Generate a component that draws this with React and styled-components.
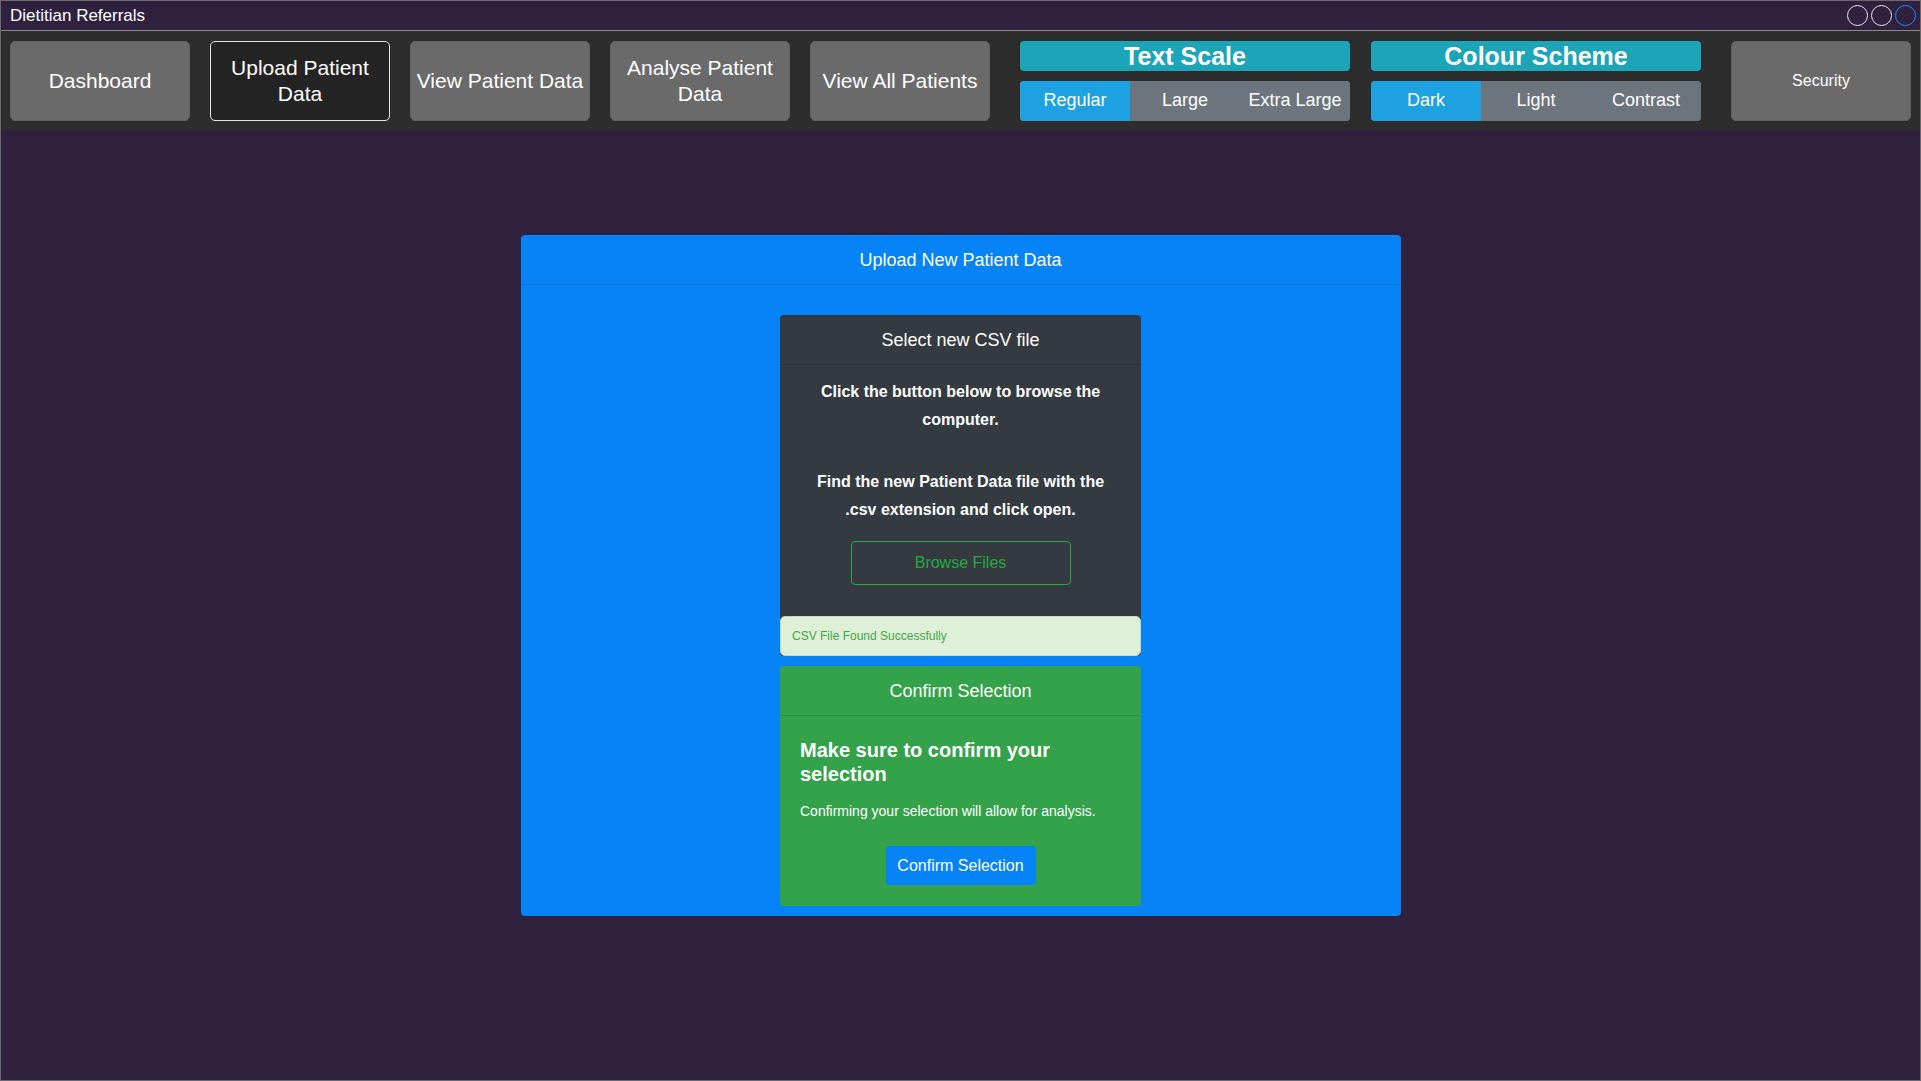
import React from "react";
import styled, { createGlobalStyle } from "styled-components";

const GlobalStyle = createGlobalStyle`
  html, body { margin: 0; padding: 0; background: #2f213d; }
  body { font-family: "Liberation Sans", Arial, sans-serif; color: #fff; }
  * { box-sizing: border-box; }
`;

const Window = styled.div`
  width: 1921px;
  height: 1081px;
  background: #2f213d;
  border: 1px solid #6a6a6a;
  display: flex;
  flex-direction: column;
  overflow: hidden;
`;

const TitleBar = styled.div`
  height: 29px;
  display: flex;
  align-items: center;
  justify-content: space-between;
  padding: 0 4px 0 9px;
  font-size: 17px;
  color: #fff;
`;

const Circles = styled.div`
  display: flex;
  gap: 3px;
  align-items: center;
`;

const Circle = styled.span`
  width: 21px;
  height: 21px;
  border-radius: 50%;
  border: 1.5px solid ${(p) => (p.$blue ? "#1a8cff" : "#e8e8e8")};
`;

const NavBar = styled.nav`
  height: 100px;
  background: #2c2c2c;
  border-top: 1px solid #8a8a8a;
  display: flex;
  align-items: center;
  padding: 0 9px;
`;

const NavButton = styled.button`
  width: 180px;
  height: 80px;
  margin-right: ${(p) => (p.$last ? 0 : 20)}px;
  border-radius: 5px;
  border: 1px solid ${(p) => (p.$active ? "#e6e6e6" : "#5f5f5f")};
  background: ${(p) => (p.$active ? "#232323" : "#6a6a6a")};
  color: #fff;
  font-family: "Liberation Sans", Arial, sans-serif;
  font-size: ${(p) => (p.$small ? "16px" : "21px")};
  line-height: 26px;
  padding: 0 2px;
  text-align: center;
  cursor: pointer;
`;

const Group = styled.div`
  width: 330px;
  height: 80px;
  display: flex;
  flex-direction: column;
  gap: 10px;
  margin-left: ${(p) => p.$ml}px;
  margin-right: ${(p) => p.$mr}px;
`;

const GroupTitle = styled.div`
  height: 30px;
  background: #1ca5b8;
  border-radius: 4px;
  display: flex;
  align-items: center;
  justify-content: center;
  padding-top: 2px;
  font-size: 25px;
  font-weight: 700;
  color: #fff;
`;

const Segments = styled.div`
  height: 40px;
  display: flex;
  border-radius: 4px;
  overflow: hidden;
  background: #6c757d;
`;

const Segment = styled.button`
  flex: 1;
  border: none;
  background: ${(p) => (p.$active ? "#1ea1e0" : "#6c757d")};
  color: #fff;
  font-family: "Liberation Sans", Arial, sans-serif;
  font-size: 18px;
  padding: 0;
  cursor: pointer;
`;

const Main = styled.main`
  flex: 1;
  display: flex;
  justify-content: center;
  align-items: flex-start;
  padding-top: 105px;
`;

const BlueCard = styled.section`
  width: 880px;
  height: 681px;
  background: #0684f6;
  border-radius: 4px;
  display: flex;
  flex-direction: column;
`;

const CardHeader = styled.div`
  height: 50px;
  flex-shrink: 0;
  display: flex;
  align-items: center;
  justify-content: center;
  padding-top: 1px;
  font-size: 18px;
  color: #fff;
  border-bottom: 1px solid rgba(0, 0, 0, 0.12);
`;

const BlueBody = styled.div`
  flex: 1;
  display: flex;
  flex-direction: column;
  align-items: center;
  gap: 10px;
  padding-top: 30px;
`;

const InnerCard = styled.div`
  width: 361px;
  background: ${(p) => p.$bg};
  border-radius: 4px;
  display: flex;
  flex-direction: column;
  overflow: hidden;
`;

const DarkBody = styled.div`
  padding: 13px 24px 0;
  display: flex;
  flex-direction: column;
  align-items: center;
  text-align: center;
`;

const Para = styled.p`
  margin: 0 0 ${(p) => p.$mb}px;
  font-size: 16px;
  font-weight: 700;
  line-height: 28px;
  color: #fff;
`;

const OutlineButton = styled.button`
  width: 220px;
  height: 44px;
  border: 1px solid #28a745;
  border-radius: 4px;
  background: transparent;
  color: #28a745;
  font-family: "Liberation Sans", Arial, sans-serif;
  font-size: 16px;
  margin-bottom: 31px;
  cursor: pointer;
`;

const Alert = styled.div`
  height: 40px;
  background: #dff0d8;
  border: 1px solid #c9d3c4;
  border-radius: 5px;
  display: flex;
  align-items: center;
  padding: 0 11px 1px;
  font-size: 12px;
  color: #3fa846;
`;

const GreenBody = styled.div`
  padding: 22px 20px 21px;
  display: flex;
  flex-direction: column;
`;

const Heading = styled.h3`
  margin: 0 0 15px;
  font-size: 20px;
  font-weight: 700;
  line-height: 24px;
  color: #fff;
`;

const SmallText = styled.p`
  margin: 0 0 25px;
  font-size: 14px;
  line-height: 20px;
  color: #fff;
`;

const PrimaryButton = styled.button`
  align-self: center;
  width: 150px;
  height: 39px;
  border: none;
  border-radius: 4px;
  background: #0684f6;
  color: #fff;
  font-family: "Liberation Sans", Arial, sans-serif;
  font-size: 16px;
  padding: 0;
  cursor: pointer;
`;

export default function App() {
  return (
    <>
      <GlobalStyle />
      <Window>
        <TitleBar>
          <span>Dietitian Referrals</span>
          <Circles>
            <Circle />
            <Circle />
            <Circle $blue />
          </Circles>
        </TitleBar>
        <NavBar>
          <NavButton>Dashboard</NavButton>
          <NavButton $active>Upload Patient Data</NavButton>
          <NavButton>View Patient Data</NavButton>
          <NavButton>Analyse Patient Data</NavButton>
          <NavButton $last>View All Patients</NavButton>
          <Group $ml={30} $mr={21}>
            <GroupTitle>Text Scale</GroupTitle>
            <Segments>
              <Segment $active>Regular</Segment>
              <Segment>Large</Segment>
              <Segment>Extra Large</Segment>
            </Segments>
          </Group>
          <Group $ml={0} $mr={30}>
            <GroupTitle>Colour Scheme</GroupTitle>
            <Segments>
              <Segment $active>Dark</Segment>
              <Segment>Light</Segment>
              <Segment>Contrast</Segment>
            </Segments>
          </Group>
          <NavButton $small $last>Security</NavButton>
        </NavBar>
        <Main>
          <BlueCard>
            <CardHeader>Upload New Patient Data</CardHeader>
            <BlueBody>
              <InnerCard $bg="#343a40">
                <CardHeader>Select new CSV file</CardHeader>
                <DarkBody>
                  <Para $mb={34}>Click the button below to browse the computer.</Para>
                  <Para $mb={17}>Find the new Patient Data file with the .csv extension and click open.</Para>
                  <OutlineButton>Browse Files</OutlineButton>
                </DarkBody>
                <Alert>CSV File Found Successfully</Alert>
              </InnerCard>
              <InnerCard $bg="#33a24a">
                <CardHeader>Confirm Selection</CardHeader>
                <GreenBody>
                  <Heading>Make sure to confirm your selection</Heading>
                  <SmallText>Confirming your selection will allow for analysis.</SmallText>
                  <PrimaryButton>Confirm Selection</PrimaryButton>
                </GreenBody>
              </InnerCard>
            </BlueBody>
          </BlueCard>
        </Main>
      </Window>
    </>
  );
}
